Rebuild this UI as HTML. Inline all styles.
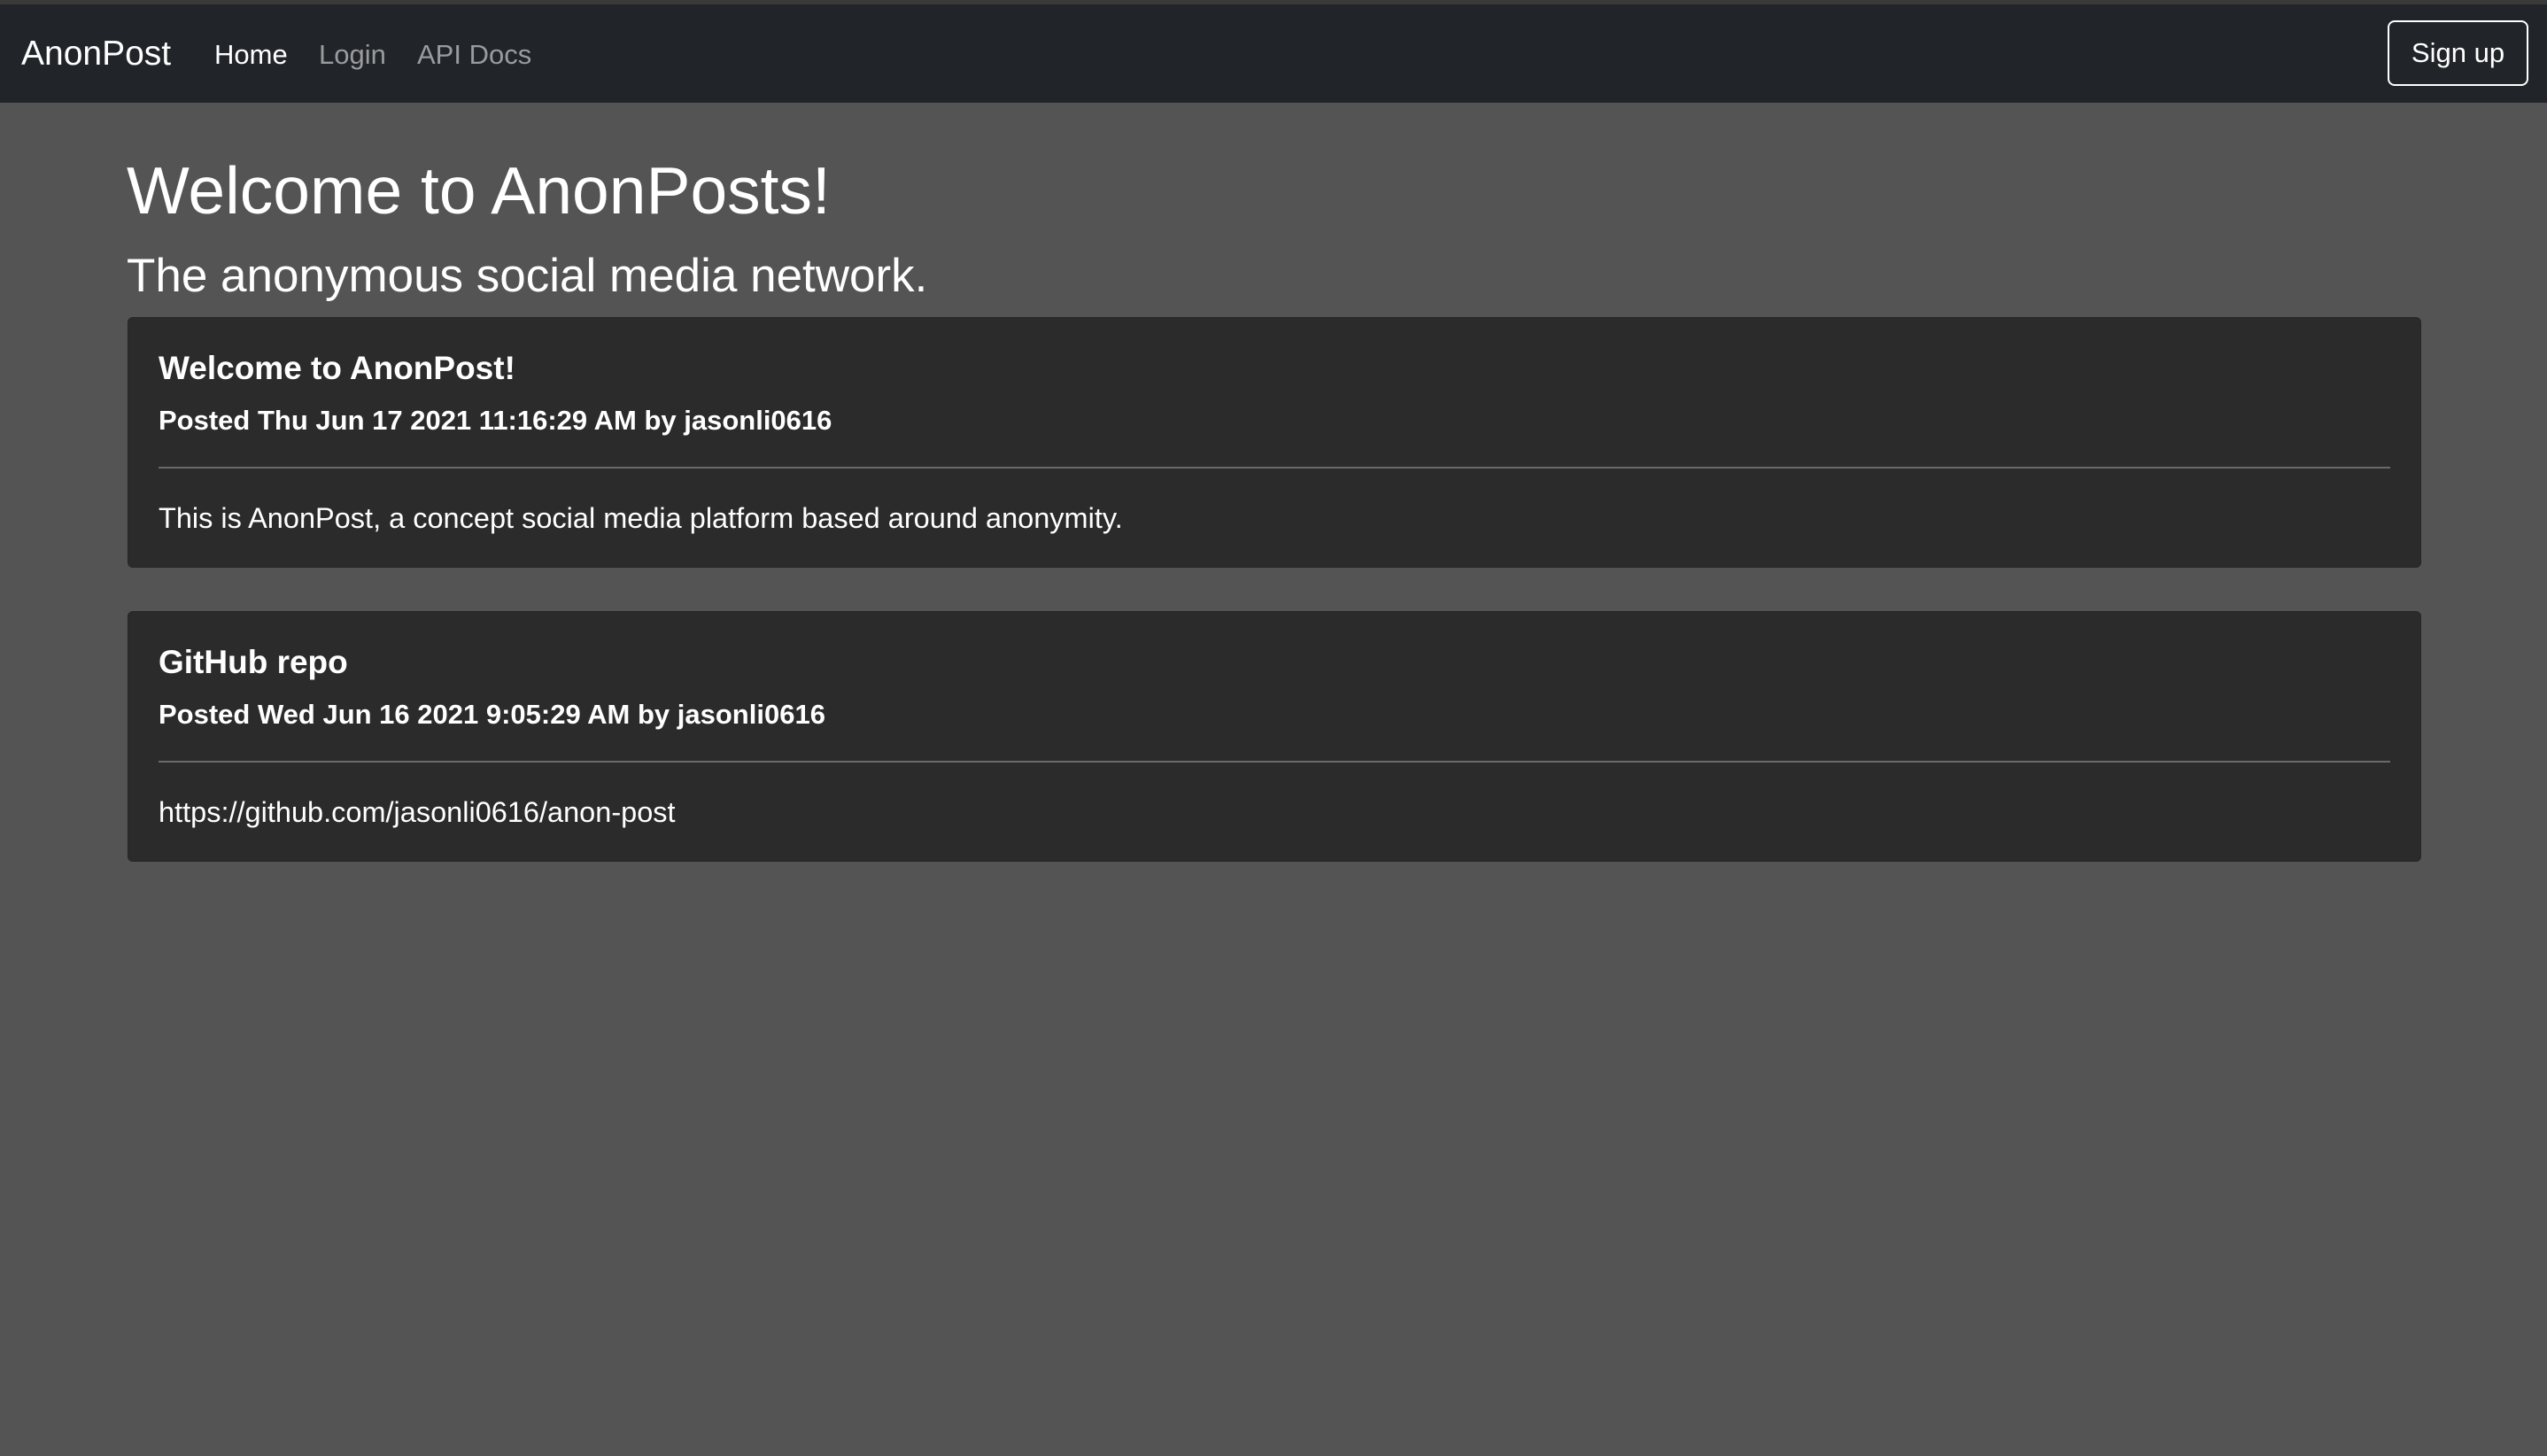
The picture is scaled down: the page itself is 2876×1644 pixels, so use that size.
<!DOCTYPE html>
<html><head><meta charset="utf-8"><style>
*{margin:0;padding:0;box-sizing:border-box}
body{width:2876px;height:1644px;background:#545454;font-family:"Liberation Sans",sans-serif;color:#fff;position:relative;overflow:hidden}
.top{position:absolute;left:0;top:0;width:2876px;height:5px;background:#3a3a3a}
.nav{position:absolute;left:0;top:5px;width:2876px;height:111px;background:#212529}
.a{position:absolute;white-space:nowrap;line-height:1}
.btn{position:absolute;left:2696px;top:23px;width:159px;height:74px;border:2px solid #fff;border-radius:8px;font-size:31px;display:flex;align-items:center;justify-content:center}
.card{position:absolute;left:144px;width:2590px;height:283px;background:#2b2b2b;border-radius:6px;border:1px solid #262626}
.card .t{position:absolute;left:34px;top:38px;font-size:37px;font-weight:bold;line-height:1}
.card .s{position:absolute;left:34px;top:100px;font-size:31px;font-weight:bold;line-height:1}
.card .hr{position:absolute;left:34px;right:34px;top:168px;height:2px;background:#6a6a6a}
.card .b{position:absolute;left:34px;top:210px;font-size:32.5px;line-height:1}
</style></head><body>
<div class="top"></div>
<div class="nav"></div>
<div class="a" style="left:24px;top:41px;font-size:39px">AnonPost</div>
<div class="a" style="left:242px;top:46px;font-size:31px">Home</div>
<div class="a" style="left:360px;top:46px;font-size:31px;color:#9a9b9c">Login</div>
<div class="a" style="left:471px;top:46px;font-size:31px;color:#9a9b9c">API Docs</div>
<div class="btn">Sign up</div>
<div class="a" style="left:143px;top:178px;font-size:75px;font-weight:300">Welcome to AnonPosts!</div>
<div class="a" style="left:143px;top:285px;font-size:53px;font-weight:300">The anonymous social media network.</div>
<div class="card" style="top:358px">
<div class="t">Welcome to AnonPost!</div>
<div class="s">Posted Thu Jun 17 2021 11:16:29 AM by jasonli0616</div>
<div class="hr"></div>
<div class="b">This is AnonPost, a concept social media platform based around anonymity.</div>
</div>
<div class="card" style="top:690px">
<div class="t">GitHub repo</div>
<div class="s">Posted Wed Jun 16 2021 9:05:29 AM by jasonli0616</div>
<div class="hr"></div>
<div class="b">https://github.com/jasonli0616/anon-post</div>
</div>
</body></html>
